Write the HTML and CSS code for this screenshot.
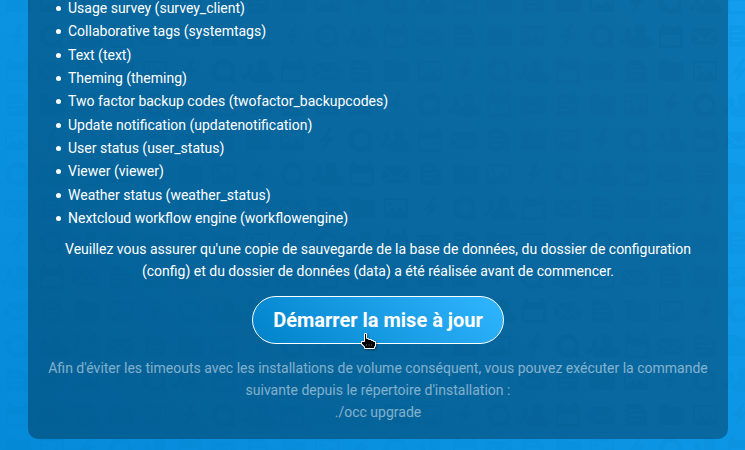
FILE: index.html
```html
<!DOCTYPE html>
<html lang="fr">
<head>
<meta charset="utf-8">
<meta name="viewport" content="width=device-width, initial-scale=1">
<title>Nextcloud</title>
<link rel="stylesheet" href="styles.css">
</head>
<body>
<svg class="backdrop" aria-hidden="true">
  <defs>
    <g id="icons">
      <path fill-rule="evenodd" d="M-12-10H12V10H-12zM-10-8V7L-4 0 0 4 4-2 10 5V-8zM-6-6a2 2 0 1 1-.1 0z"/>
      <path d="M37-12 27 2h6l-3 10L42-3h-6l4-9z"/>
      <path fill-rule="evenodd" d="M69-12a12 12 0 1 0 6 22c2 2 4 2 6 1-2-2-2-4-2-6A12 12 0 0 0 69-12zm0 5a7 7 0 1 1-.1 0z"/>
      <path d="M107-12c-4 0-6 3-5 7l1 4c0 3-8 3-9 8 0 4 5 5 13 5s13-1 13-5c0-5-8-5-8-8l1-4c1-4-2-7-6-7zM96-8c-3 0-4 2-4 5l1 3c0 2-5 3-6 5-1 3 2 4 5 4 0-4 3-6 7-8l-1-6c0-2-1-3-2-3z"/>
      <path fill-rule="evenodd" d="M126-9h2v-4h4v4h12v-4h4v4h2V12h-24zM128-1V9h19V-1z"/>
      <path d="M158-8h27L172 4zM158-5 167 2l-9 6zM185-5 176 2l9 6zM160 9l8-6 4 3 4-3 8 6z"/>
      <path fill-rule="evenodd" d="M196-11h14l7 7V11h-21zM199-6v2h9v-2zm0 5v2h14v-2zm0 5v2h9V4z"/>
      <path d="M229-11h9l3 3h13V10h-25z"/>
    </g>
    <g id="strip">
      <use href="#icons"/><use href="#icons" x="275"/><use href="#icons" x="550"/><use href="#icons" x="825"/><use href="#icons" x="1100"/>
    </g>
  </defs>
  <use href="#strip" x="-223" y="2"/>
  <use href="#strip" x="-292" y="36"/>
  <use href="#strip" x="-120" y="71"/>
  <use href="#strip" x="-189" y="105"/>
  <use href="#strip" x="-258" y="140"/>
  <use href="#strip" x="-326" y="174"/>
  <use href="#strip" x="-154" y="208"/>
  <use href="#strip" x="-292" y="243"/>
  <use href="#strip" x="-361" y="277"/>
  <use href="#strip" x="-154" y="311"/>
  <use href="#strip" x="-326" y="346"/>
  <use href="#strip" x="-189" y="380"/>
  <use href="#strip" x="-120" y="415"/>
  <use href="#strip" x="-223" y="449"/>
</svg>
<main class="update">
  <ul class="apps">
    <li>Usage survey (survey_client)</li>
    <li>Collaborative tags (systemtags)</li>
    <li>Text (text)</li>
    <li>Theming (theming)</li>
    <li>Two factor backup codes (twofactor_backupcodes)</li>
    <li>Update notification (updatenotification)</li>
    <li>User status (user_status)</li>
    <li>Viewer (viewer)</li>
    <li>Weather status (weather_status)</li>
    <li>Nextcloud workflow engine (workflowengine)</li>
  </ul>
  <p class="notice">Veuillez vous assurer qu'une copie de sauvegarde de la base de données, du dossier de configuration (config) et du dossier de données (data) a été réalisée avant de commencer.</p>
  <div class="action">
    <button class="start" type="button">Démarrer la mise à jour</button>
    <svg class="pointer" viewBox="0 0 16 17" aria-hidden="true">
      <path d="M3.500.5h2v5h2v1h3v1h2v1h2v5h-1v2h-10v-2h-1v-1h-1v-1h-1v-3h3z" fill="#000" stroke="#fff" stroke-linejoin="round"/>
      <path d="M5.500 11v2M8 11v2M10.500 11v2" stroke="#444" fill="none"/>
    </svg>
  </div>
  <p class="hint">Afin d'éviter les timeouts avec les installations de volume conséquent, vous pouvez exécuter la commande suivante depuis le répertoire d'installation :<br>./occ upgrade</p>
</main>
</body>
</html>
```

FILE: styles.css
```css
* {
  box-sizing: border-box;
}

body {
  margin: 0;
  min-height: 100vh;
  padding: 0 17px 11px 28px;
  overflow: hidden;
  background: linear-gradient(40deg, #058ad8, #129eee);
  color: #fff;
  font: 14px/22px Roboto, "Liberation Sans", sans-serif;
}

.backdrop {
  position: absolute;
  inset: 0;
  z-index: -1;
  width: 100%;
  height: 100%;
  fill: #0082c9;
  opacity: .12;
}

.update {
  padding: 0 20px 16px;
  border-radius: 0 0 10px 10px;
  background: rgba(0, 0, 0, .3);
  text-align: center;
}

.apps {
  display: grid;
  align-content: space-between;
  min-height: 233px;
  margin: -3px 0 8px;
  padding: 0 0 0 8px;
  line-height: 23px;
  list-style: none;
  text-align: left;
}

.apps li {
  display: flex;
  align-items: center;
  gap: 7px;
}

.apps li::before {
  content: "";
  width: 5px;
  height: 5px;
  border-radius: 50%;
  background: #fff;
}

.notice,
.hint {
  margin: 0;
}

.action {
  position: relative;
  width: fit-content;
  margin: 14px auto 13px;
}

.start {
  display: block;
  height: 48px;
  padding: 0 20px;
  border: 1px solid #fff;
  border-radius: 24px;
  background: linear-gradient(40deg, #0082c9, #30b6ff);
  color: #fff;
  font: bold 20px/24px Roboto, "Liberation Sans", sans-serif;
  cursor: pointer;
}

.pointer {
  position: absolute;
  top: 37px;
  left: 109px;
  width: 16px;
  height: 17px;
  pointer-events: none;
  filter: drop-shadow(1px 1px 1px rgba(0, 0, 0, .4));
}

.hint {
  color: rgba(255, 255, 255, .5);
}
```
